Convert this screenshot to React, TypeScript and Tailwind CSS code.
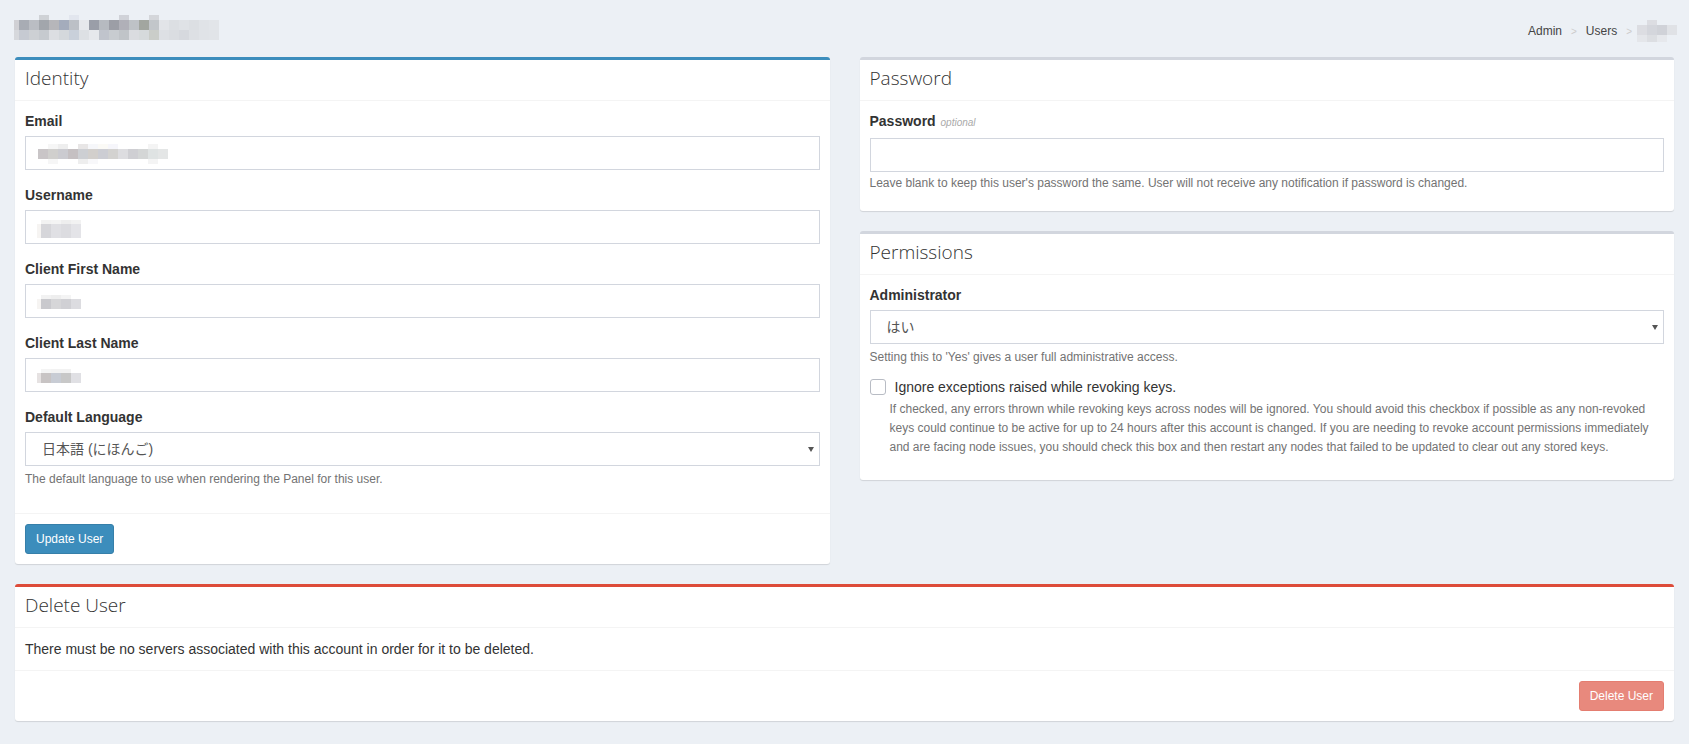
import React from 'react';

type Cell = { w: string; bg: string };
type MosaicRow = { h: string; cells: Cell[] };

// pixelated (blurred) text, drawn as blocks of colour
function Mosaic({ rows }: { rows: MosaicRow[] }) {
  return (
    <div className="flex flex-col">
      {rows.map((row, i) => (
        <div key={i} className={`flex ${row.h}`}>
          {row.cells.map((c, j) => (
            <div key={j} className={`${c.w} ${c.bg}`} />
          ))}
        </div>
      ))}
    </div>
  );
}

const row = (h: string, w: string, bgs: string[], firstW?: string): MosaicRow => ({
  h,
  cells: bgs.map((bg, i) => ({ w: i === 0 && firstW ? firstW : w, bg })),
});

const titleMosaic: MosaicRow[] = [
  row('h-[5px]', 'w-[10px]', [
    'bg-transparent', 'bg-transparent', 'bg-transparent', 'bg-[#cfd2d6]', 'bg-transparent', 'bg-transparent',
    'bg-[#e2e6ee]', 'bg-transparent', 'bg-transparent', 'bg-transparent', 'bg-transparent', 'bg-[#d0d2d8]',
    'bg-transparent', 'bg-transparent', 'bg-[#d4d6da]', 'bg-transparent', 'bg-transparent', 'bg-transparent',
    'bg-transparent', 'bg-transparent', 'bg-transparent',
  ], 'w-[5px]'),
  row('h-[10px]', 'w-[10px]', [
    'bg-[#d0d0d4]', 'bg-[#a8acb4]', 'bg-[#babdc3]', 'bg-[#a2a6ac]', 'bg-[#b6b6ba]', 'bg-[#a4acbc]',
    'bg-[#bcc0c6]', 'bg-[#e6e8ec]', 'bg-[#9a9ea8]', 'bg-[#b6bac0]', 'bg-[#9c9ea6]', 'bg-[#b0b0b8]',
    'bg-[#bec2c6]', 'bg-[#a2a6a0]', 'bg-[#c2c6ca]', 'bg-[#e2e4e8]', 'bg-[#dcdfe3]', 'bg-[#dfe2e6]',
    'bg-[#dcdfe3]', 'bg-[#e0e3e7]', 'bg-[#e2e5e9]',
  ], 'w-[5px]'),
  row('h-[10px]', 'w-[10px]', [
    'bg-[#d6d8dc]', 'bg-[#c6cad2]', 'bg-[#cdd0d4]', 'bg-[#c6cacf]', 'bg-[#dcdee2]', 'bg-[#d4d8dc]',
    'bg-[#c9d0da]', 'bg-[#dde0e4]', 'bg-[#e6e8ec]', 'bg-[#c0c4cc]', 'bg-[#c8ccd0]', 'bg-[#c0c4c8]',
    'bg-[#dadce0]', 'bg-[#d6dadc]', 'bg-[#cacdc9]', 'bg-[#dde0e4]', 'bg-[#dadde1]', 'bg-[#d6d9de]',
    'bg-[#dde0e4]', 'bg-[#e0e3e7]', 'bg-[#e1e4e8]',
  ], 'w-[5px]'),
];

const crumbMosaic: MosaicRow[] = [
  row('h-[5px]', 'w-[10px]', ['bg-transparent', 'bg-[#dcdde2]', 'bg-transparent', 'bg-transparent']),
  row('h-[10px]', 'w-[10px]', ['bg-[#dcdde2]', 'bg-[#d4d6dc]', 'bg-[#d0d2d8]', 'bg-[#e0e2e6]']),
  row('h-[7px]', 'w-[10px]', ['bg-[#e4e6ea]', 'bg-[#dcdee2]', 'bg-[#e6e8ec]', 'bg-transparent']),
];

const emailMosaic: MosaicRow[] = [
  row('h-[5px]', 'w-[10px]', [
    'bg-white', 'bg-[#f6f6f6]', 'bg-[#eeeeee]', 'bg-white', 'bg-[#e8e6e6]', 'bg-[#f6f7fa]', 'bg-[#fbfaf6]',
    'bg-[#f6f6fb]', 'bg-white', 'bg-white', 'bg-white', 'bg-[#f4f4f4]', 'bg-white',
  ]),
  row('h-[10px]', 'w-[10px]', [
    'bg-[#c9c5c7]', 'bg-[#d0cfcd]', 'bg-[#cbcbd0]', 'bg-[#c5c0c2]', 'bg-[#cdcfd3]', 'bg-[#d2cfcc]',
    'bg-[#cccdd3]', 'bg-[#d3d2d0]', 'bg-[#dddde0]', 'bg-[#cfcfd3]', 'bg-[#d4d6d6]', 'bg-[#dfe3e3]', 'bg-[#e4e6e6]',
  ]),
  row('h-[5px]', 'w-[10px]', [
    'bg-white', 'bg-[#f6f6f6]', 'bg-white', 'bg-white', 'bg-[#eeeeee]', 'bg-[#f8f8fa]', 'bg-white',
    'bg-white', 'bg-white', 'bg-white', 'bg-white', 'bg-[#f4f4f4]', 'bg-white',
  ]),
];

const usernameMosaic: MosaicRow[] = [
  row('h-[4px]', 'w-[10px]', ['bg-white', 'bg-[#f2f2f2]', 'bg-[#f4f4f4]', 'bg-[#eeeeee]', 'bg-[#f2f2f2]'], 'w-[4px]'),
  row('h-[14px]', 'w-[10px]', ['bg-[#f6f4f2]', 'bg-[#d6d6da]', 'bg-[#e0e0e4]', 'bg-[#dcdce0]', 'bg-[#e4e4e8]'], 'w-[4px]'),
];

const firstNameMosaic: MosaicRow[] = [
  row('h-[4px]', 'w-[10px]', ['bg-white', 'bg-[#f2f2f2]', 'bg-[#eeeeee]', 'bg-[#f4f4f4]', 'bg-white'], 'w-[4px]'),
  row('h-[10px]', 'w-[10px]', ['bg-[#f6f4f2]', 'bg-[#c9c9cd]', 'bg-[#d6d6d8]', 'bg-[#d0d0d4]', 'bg-[#dcdce0]'], 'w-[4px]'),
];

const lastNameMosaic: MosaicRow[] = [
  row('h-[4px]', 'w-[10px]', ['bg-white', 'bg-[#f4f4f4]', 'bg-[#f2f2f2]', 'bg-[#f2f2f2]', 'bg-white'], 'w-[4px]'),
  row('h-[10px]', 'w-[10px]', ['bg-[#e6e2e2]', 'bg-[#c8c4c4]', 'bg-[#c8ccd4]', 'bg-[#c8c8c8]', 'bg-[#e0e0e4]'], 'w-[4px]'),
];

function Box({
  border,
  title,
  children,
  footer,
}: {
  border: string;
  title: string;
  children: React.ReactNode;
  footer?: React.ReactNode;
}) {
  return (
    <div className={`rounded-[3px] border-t-[3px] ${border} bg-white shadow-[0_1px_1px_rgba(0,0,0,0.12)]`}>
      <div className="border-b border-[#f4f4f4] px-[10px] pt-[8px] pb-[12px]">
        <h3 className="font-['Open_Sans',sans-serif] text-[19px] font-light leading-[20px] text-[#333]">{title}</h3>
      </div>
      <div className="p-[10px]">{children}</div>
      {footer && <div className="border-t border-[#f4f4f4] p-[10px]">{footer}</div>}
    </div>
  );
}

function Label({ children }: { children: React.ReactNode }) {
  return <label className="mb-[5px] block text-[14px] font-bold leading-[20px] text-[#333]">{children}</label>;
}

function Input({ children }: { children?: React.ReactNode }) {
  return (
    <div className="flex h-[34px] items-center border border-[#d2d6de] bg-white pl-[11px]">{children}</div>
  );
}

function Select({ value }: { value: string }) {
  return (
    <div className="flex h-[34px] items-center justify-between border border-[#d2d6de] bg-white pl-[16px] pr-[5px] text-[14px] text-[#555]">
      <span>{value}</span>
      <span className="h-0 w-0 border-x-[3px] border-t-[5px] border-b-0 border-x-transparent border-t-[#555]" />
    </div>
  );
}

function Help({ children }: { children: React.ReactNode }) {
  return <p className="mt-[5px] text-[12px] leading-[17px] text-[#737373]">{children}</p>;
}

function Field({ label, children }: { label: React.ReactNode; children: React.ReactNode }) {
  return (
    <div className="mb-[15px]">
      <Label>{label}</Label>
      {children}
    </div>
  );
}

export default function App() {
  return (
    <div className="min-h-screen bg-[#ecf0f5] font-['Liberation_Sans','Noto_Sans_CJK_JP',sans-serif] text-[14px] text-[#333]">
      <div className="flex h-[42px] items-end justify-between pl-[14px] pr-[12px]">
        <div className="pb-[2px]">
          <Mosaic rows={titleMosaic} />
        </div>
        <div className="flex items-center gap-[9px] text-[12px] text-[#444]">
          <span>Admin</span>
          <span className="text-[10px] text-[#ccc]">&gt;</span>
          <span>Users</span>
          <span className="text-[10px] text-[#ccc]">&gt;</span>
          <div className="-ml-[4px]">
            <Mosaic rows={crumbMosaic} />
          </div>
        </div>
      </div>

      <div className="px-[15px] pt-[15px] pb-[20px]">
        <div className="grid grid-cols-2 items-start gap-x-[30px]">
          <Box
            border="border-t-[#3c8dbc]"
            title="Identity"
            footer={
              <button className="h-[30px] rounded-[3px] border border-[#367fa9] bg-[#3c8dbc] px-[10px] text-[12px] text-white">
                Update User
              </button>
            }
          >
            <Field label="Email">
              <Input>
                <div className="ml-[1px] mt-[2px]">
                  <Mosaic rows={emailMosaic} />
                </div>
              </Input>
            </Field>
            <Field label="Username">
              <Input>
                <div className="mt-[3px]">
                  <Mosaic rows={usernameMosaic} />
                </div>
              </Input>
            </Field>
            <Field label="Client First Name">
              <Input>
                <div className="mt-[1px]">
                  <Mosaic rows={firstNameMosaic} />
                </div>
              </Input>
            </Field>
            <Field label="Client Last Name">
              <Input>
                <div className="mt-[1px]">
                  <Mosaic rows={lastNameMosaic} />
                </div>
              </Input>
            </Field>
            <Field label="Default Language">
              <Select value="日本語 (にほんご)" />
              <Help>The default language to use when rendering the Panel for this user.</Help>
            </Field>
          </Box>

          <div className="flex flex-col gap-[20px]">
            <Box border="border-t-[#d2d6de]" title="Password">
              <Label>
                Password <span className="ml-[1px] text-[10px] font-normal italic text-[#aaa]">optional</span>
              </Label>
              <Input />
              <p className="mb-[9px] mt-[3px] text-[12px] leading-[17px] text-[#737373]">
                Leave blank to keep this user's password the same. User will not receive any notification if password is
                changed.
              </p>
            </Box>

            <Box border="border-t-[#d2d6de]" title="Permissions">
              <Field label="Administrator">
                <Select value="はい" />
                <Help>Setting this to 'Yes' gives a user full administrative access.</Help>
              </Field>
              <div className="mb-[13px] mt-[-2px]">
                <div className="flex h-[16px] items-center gap-[9px]">
                  <span className="h-[16px] w-[16px] rounded-[3px] border border-[#b8bcc4] bg-white" />
                  <span className="text-[14px] leading-[16px] text-[#333]">Ignore exceptions raised while revoking keys.</span>
                </div>
                <p className="mt-[5px] pl-[20px] text-[12px] leading-[19px] text-[#737373]">
                  If checked, any errors thrown while revoking keys across nodes will be ignored. You should avoid this
                  checkbox if possible as any non-revoked
                  <br />
                  keys could continue to be active for up to 24 hours after this account is changed. If you are needing to
                  revoke account permissions immediately
                  <br />
                  and are facing node issues, you should check this box and then restart any nodes that failed to be
                  updated to clear out any stored keys.
                </p>
              </div>
            </Box>
          </div>
        </div>

        <div className="mt-[20px]">
          <Box
            border="border-t-[#dd4b39]"
            title="Delete User"
            footer={
              <div className="flex justify-end">
                <button className="h-[30px] rounded-[3px] border border-[#d73925] bg-[#dd4b39] px-[10px] text-[12px] text-white opacity-65">
                  Delete User
                </button>
              </div>
            }
          >
            <p className="leading-[22px]">
              There must be no servers associated with this account in order for it to be deleted.
            </p>
          </Box>
        </div>
      </div>
    </div>
  );
}
